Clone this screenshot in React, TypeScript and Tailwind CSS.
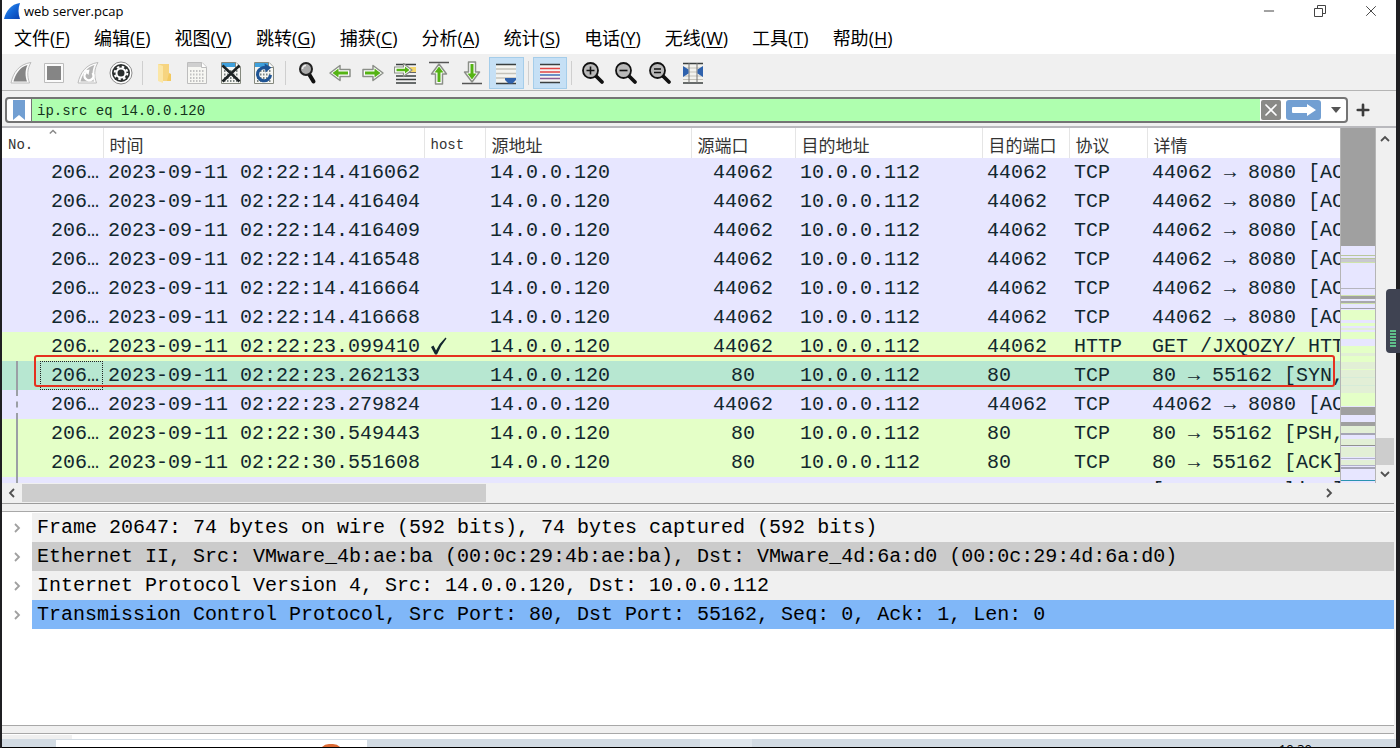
import React from 'react';
import { Minus, X, Plus } from 'lucide-react';

const menus = [
  ['文件', 'F'],
  ['编辑', 'E'],
  ['视图', 'V'],
  ['跳转', 'G'],
  ['捕获', 'C'],
  ['分析', 'A'],
  ['统计', 'S'],
  ['电话', 'Y'],
  ['无线', 'W'],
  ['工具', 'T'],
  ['帮助', 'H'],
];

const columns = [
  { label: 'No.', width: 'w-[101px]', latin: true },
  { label: '时间', width: 'w-[321px]' },
  { label: 'host', width: 'w-[61px]', latin: true },
  { label: '源地址', width: 'w-[206px]' },
  { label: '源端口', width: 'w-[104px]' },
  { label: '目的地址', width: 'w-[187px]' },
  { label: '目的端口', width: 'w-[87px]' },
  { label: '协议', width: 'w-[78px]' },
  { label: '详情', width: '' },
];

interface Packet {
  time: string;
  host?: boolean;
  port: string;
  proto: string;
  info: string;
  tone: 'tcp' | 'http' | 'selected';
  trace?: 'solid' | 'dashed';
}

const packets: Packet[] = [
  { time: '02:22:14.416062', port: '44062', proto: 'TCP', info: '44062 → 8080 [ACK]', tone: 'tcp' },
  { time: '02:22:14.416404', port: '44062', proto: 'TCP', info: '44062 → 8080 [ACK]', tone: 'tcp' },
  { time: '02:22:14.416409', port: '44062', proto: 'TCP', info: '44062 → 8080 [ACK]', tone: 'tcp' },
  { time: '02:22:14.416548', port: '44062', proto: 'TCP', info: '44062 → 8080 [ACK]', tone: 'tcp' },
  { time: '02:22:14.416664', port: '44062', proto: 'TCP', info: '44062 → 8080 [ACK]', tone: 'tcp' },
  { time: '02:22:14.416668', port: '44062', proto: 'TCP', info: '44062 → 8080 [ACK]', tone: 'tcp' },
  { time: '02:22:23.099410', host: true, port: '44062', proto: 'HTTP', info: 'GET /JXQOZY/ HTTP', tone: 'http' },
  { time: '02:22:23.262133', port: '80', proto: 'TCP', info: '80 → 55162 [SYN, ACK]', tone: 'selected', trace: 'solid' },
  { time: '02:22:23.279824', port: '44062', proto: 'TCP', info: '44062 → 8080 [ACK]', tone: 'tcp', trace: 'dashed' },
  { time: '02:22:30.549443', port: '80', proto: 'TCP', info: '80 → 55162 [PSH, ACK]', tone: 'http', trace: 'solid' },
  { time: '02:22:30.551608', port: '80', proto: 'TCP', info: '80 → 55162 [ACK]', tone: 'http', trace: 'solid' },
];

const tones = {
  tcp: 'bg-[#e7e6ff]',
  http: 'bg-[#e4ffc7]',
  selected: 'bg-[#b7e7d1]',
};

const details = [
  { text: 'Frame 20647: 74 bytes on wire (592 bits), 74 bytes captured (592 bits)', bg: 'bg-[#f0f0f0]' },
  {
    text: 'Ethernet II, Src: VMware_4b:ae:ba (00:0c:29:4b:ae:ba), Dst: VMware_4d:6a:d0 (00:0c:29:4d:6a:d0)',
    bg: 'bg-[#cbcbcb]',
  },
  { text: 'Internet Protocol Version 4, Src: 14.0.0.120, Dst: 10.0.0.112', bg: 'bg-[#f0f0f0]' },
  { text: 'Transmission Control Protocol, Src Port: 80, Dst Port: 55162, Seq: 0, Ack: 1, Len: 0', bg: 'bg-[#80b7f8]' },
];

// y, height, colour
const mapBands: [number, number, string][] = [
  [0, 118, '#a0a0a0'],
  [127, 1, '#b9c79c'],
  [130, 1, '#b9c79c'],
  [131, 3, '#c9c8cf'],
  [134, 1, '#cfe3ab'],
  [160, 1, '#b5b5bd'],
  [167, 1, '#cfe3ab'],
  [168, 3, '#a0a0a0'],
  [173, 2, '#a8a8ac'],
  [175, 1, '#cfe3ab'],
  [180, 1, '#a0a0a8'],
  [182, 10, '#e4ffc7'],
  [195, 3, '#e4ffc7'],
  [200, 2, '#e2efd6'],
  [204, 7, '#e4ffc7'],
  [218, 7, '#e4ffc7'],
  [225, 3, '#e2efd6'],
  [228, 6, '#e4ffc7'],
  [234, 31, '#e2efd6'],
  [241, 1, '#e4ffc7'],
  [249, 1, '#d6ecd8'],
  [257, 1, '#d6ecd8'],
  [265, 13, '#e4ffc7'],
  [279, 8, '#a0a0a0'],
  [294, 4, '#a0a0a0'],
  [298, 7, '#e2efd6'],
  [305, 2, '#a5a5b5'],
  [311, 6, '#e2efd6'],
  [317, 1, '#909090'],
  [319, 10, '#e2efd6'],
  [330, 1, '#b0b0c8'],
  [332, 5, '#e2efd6'],
  [337, 1, '#b0b0c8'],
  [339, 2, '#a5a5b5'],
  [352, 1, '#2a93b0'],
];

function Icon({ children }: { children: React.ReactNode }) {
  return (
    <svg viewBox="0 0 24 24" className="h-6 w-6" fill="none" aria-hidden="true">
      {children}
    </svg>
  );
}

function Fin() {
  return <path d="M2 22C4 12 10 3 22 1.500C18 8 18 15 20.500 22Z" fill="#fbfbfb" stroke="#bcbcbc" />;
}

function PageShape({ muted }: { muted?: boolean }) {
  return (
    <>
      <path d="M2.500 1.500H17L21.500 6V22.500H2.500Z" fill="#f7f7f3" stroke={muted ? '#bdbdbd' : '#85897f'} />
      <path d="M3 2H16.500L20 6H3Z" fill={muted ? '#cfcfcf' : '#3fa0dc'} />
      <path d="M16.500 1.500V6.500H21.500" fill="#fff" stroke={muted ? '#bdbdbd' : '#85897f'} />
      <path
        d="M5 10h14M5 13.500h14M5 17h14M5 20h14"
        stroke={muted ? '#c2c2c2' : '#7d8583'}
        strokeWidth="2"
        strokeDasharray="1.500 1.500"
      />
    </>
  );
}

function ArrowShape({ transform }: { transform?: string }) {
  return (
    <g transform={transform}>
      <path d="M2 8.500H12V4.500L22 12L12 19.500V15.500H2Z" fill="#fff" stroke="#8b8f88" strokeWidth="1.500" strokeLinejoin="round" />
      <path d="M4 10.500H13.500V7.500L19.500 12L13.500 16.500V13.500H4Z" fill="#55b314" />
    </g>
  );
}

function Magnifier({ children }: { children?: React.ReactNode }) {
  return (
    <>
      <path d="M15 15L21 21" stroke="#111" strokeWidth="3.800" strokeLinecap="round" />
      <circle cx="9.500" cy="9.500" r="7.500" fill="#b9b9b9" stroke="#111" strokeWidth="1.800" />
      <g stroke="#111" strokeWidth="1.600">{children}</g>
    </>
  );
}

const groups = [
  {
    width: 'w-[134px]',
    items: [
      {
        name: 'Start capture',
        art: (
          <>
            <Fin />
            <path d="M4.500 20.500C6.500 13 11 6 18.500 4C16 9 16 15 18 20.500Z" fill="#858585" />
          </>
        ),
      },
      {
        name: 'Stop capture',
        art: (
          <>
            <path d="M2.500 2.500H21.500V21.500H2.500Z" fill="#fbfbfb" stroke="#bcbcbc" />
            <path d="M5 5H19V19H5Z" fill="#858585" />
          </>
        ),
      },
      {
        name: 'Restart capture',
        art: (
          <>
            <Fin />
            <path d="M4.500 20.500C6.500 13 11 6 18.500 4C16 9 16 15 18 20.500Z" fill="#b5b5b5" />
            <path d="M10 11.500A4.500 4.500 0 1 0 16.500 12" stroke="#fff" strokeWidth="2.400" />
            <path d="M8 9.500L13.500 8.500L12.500 14Z" fill="#fff" />
          </>
        ),
      },
      {
        name: 'Capture options',
        art: (
          <>
            <circle cx="12" cy="12" r="11" fill="#fff" stroke="#8d8d8d" />
            <circle cx="12" cy="12" r="9" fill="#2b2f2f" />
            <circle cx="12" cy="12" r="4.500" stroke="#fff" strokeWidth="2" />
            <circle cx="12" cy="12" r="6.300" stroke="#fff" strokeWidth="2" strokeDasharray="2.500 2.450" />
            <circle cx="12" cy="12" r="2.500" fill="#2b2f2f" />
          </>
        ),
      },
    ],
  },
  {
    width: 'w-[134px]',
    items: [
      {
        name: 'Open',
        art: (
          <>
            <path d="M6 3H17V20H6Z" fill="#f6d480" />
            <path d="M6 3L11 5V22L6 20Z" fill="#fbe6a6" />
            <path d="M17 12L19 13V20H15Z" fill="#f3c95f" />
          </>
        ),
      },
      { name: 'Save', art: <PageShape muted /> },
      {
        name: 'Close file',
        art: (
          <>
            <PageShape />
            <path d="M3.500 4.500L20.500 20.500M20.500 4.500L3.500 20.500" stroke="#1d2324" strokeWidth="2.600" />
          </>
        ),
      },
      {
        name: 'Reload',
        art: (
          <>
            <PageShape />
            <path d="M14.500 7.200A6.500 6.500 0 1 0 18.500 14" stroke="#1f5494" strokeWidth="3.200" />
            <path d="M12.500 2.500L19.500 6.500L13.500 11.500Z" fill="#1f5494" />
          </>
        ),
      },
    ],
  },
  {
    width: 'w-[234px]',
    items: [
      {
        name: 'Find packet',
        art: (
          <>
            <path d="M14 13L18.500 20.500" stroke="#111" strokeWidth="4" strokeLinecap="round" />
            <circle cx="11" cy="8" r="6" fill="#a9a9a9" stroke="#222" strokeWidth="2" />
            <path d="M7.500 8A3.500 3.500 0 0 1 11 4.500" stroke="#eee" strokeWidth="1.500" />
          </>
        ),
      },
      { name: 'Previous packet', art: <ArrowShape transform="matrix(-1 0 0 1 24 0)" /> },
      { name: 'Next packet', art: <ArrowShape /> },
      {
        name: 'Go to packet',
        art: (
          <>
            <path d="M2 3.500H22M2 15H22M2 18.500H22M2 22H22" stroke="#3a3f3f" strokeWidth="1.500" />
            <path d="M16 6H22V11H16Z" fill="#f5d76a" />
            <path d="M2 11.500H22" stroke="#666" />
            <path d="M0.500 6H9.500V2.500L18 9L9.500 15.500V12H0.500Z" fill="#fff" stroke="#8b8f88" strokeWidth="1.200" strokeLinejoin="round" />
            <path d="M2.500 7.800H11V5.500L15.500 9L11 12.500V10.200H2.500Z" fill="#55b314" />
          </>
        ),
      },
      {
        name: 'First packet',
        art: (
          <>
            <path d="M2 1.500H22" stroke="#555" strokeWidth="1.500" />
            <ArrowShape transform="matrix(0 -1 1 0 0 25)" />
          </>
        ),
      },
      {
        name: 'Last packet',
        art: (
          <>
            <path d="M2 22.500H22" stroke="#555" strokeWidth="1.500" />
            <ArrowShape transform="matrix(0 1 -1 0 24 -1)" />
          </>
        ),
      },
      {
        name: 'Auto scroll',
        active: true,
        art: (
          <>
            <path d="M2 4H22V22H2Z" fill="#f4f4f0" />
            <path d="M2 3.500H22M2 22.500H22" stroke="#3a3f3f" strokeWidth="1.500" />
            <path d="M2 8H22M2 12.500H22M2 17H22" stroke="#c4c2ba" strokeWidth="1.500" />
            <path d="M11 17H22V19L18.500 22.500H14.500L11 19Z" fill="#2f62ad" />
          </>
        ),
      },
    ],
  },
  {
    width: 'w-[34px]',
    items: [
      {
        name: 'Colorize',
        active: true,
        art: (
          <>
            <path d="M2 3H22V22H2Z" fill="#f4f4f4" />
            <path d="M2 3.500H22" stroke="#3a3f3f" strokeWidth="1.500" />
            <path d="M2 7.500H22M2 11H22" stroke="#e04646" strokeWidth="1.500" />
            <path d="M2 14H22" stroke="#3f6fb8" strokeWidth="1.500" />
            <path d="M2 17.500H22" stroke="#8c5a94" strokeWidth="1.500" />
            <path d="M2 21.500H22" stroke="#3a3f3f" strokeWidth="1.500" />
          </>
        ),
      },
    ],
  },
  {
    width: 'w-[134px]',
    items: [
      { name: 'Zoom in', art: <Magnifier><path d="M5.500 9.500H13.500M9.500 5.500V13.500" /></Magnifier> },
      { name: 'Zoom out', art: <Magnifier><path d="M5.500 9.500H13.500" /></Magnifier> },
      { name: 'Normal size', art: <Magnifier><path d="M6 8H13M6 11.500H13" /></Magnifier> },
      {
        name: 'Resize columns',
        art: (
          <>
            <path d="M2 3H22V22H2Z" fill="#f2f2ee" />
            <path d="M2 7H22M2 11H22M2 15H22M2 18.500H22" stroke="#c4c2ba" />
            <path d="M2 2.500H22M2 22H22" stroke="#3a3f3f" strokeWidth="1.500" />
            <path d="M8 2V22M16 2V22" stroke="#777" />
            <path d="M2 5L7.500 8.500V12.500L2 16ZM22 5L16.500 8.500V12.500L22 16Z" fill="#2f62ad" />
          </>
        ),
      },
    ],
  },
];

function Chevron({ d, className }: { d: string; className: string }) {
  return (
    <svg viewBox="0 0 10 10" className={className} fill="none" stroke="currentColor" strokeWidth="1.800" aria-hidden="true">
      <path d={d} />
    </svg>
  );
}

function TitleBar() {
  return (
    <div className="flex h-[22px] items-center bg-white pl-[2px]">
      <svg viewBox="0 0 18 18" className="h-[18px] w-[18px]" aria-hidden="true">
        <defs>
          <linearGradient id="fin" x1="0" y1="0" x2="1" y2="1">
            <stop offset="0" stopColor="#4aa0ee" />
            <stop offset="0.5" stopColor="#1467d8" />
            <stop offset="1" stopColor="#0b3fae" />
          </linearGradient>
        </defs>
        <path d="M0 17C2 9 7 2 16 1C14 6 14 12 16 17Z" fill="url(#fin)" />
      </svg>
      <h1 className="ml-[2px] flex-1 text-[13px] leading-5 text-black">web server.pcap</h1>
      <div className="flex text-[#444]">
        <button aria-label="Minimize" className="flex h-5 w-[51px] items-center justify-center">
          <Minus className="h-4 w-4" strokeWidth={1.5} />
        </button>
        <button aria-label="Restore" className="flex h-5 w-[51px] items-center justify-center">
          <svg viewBox="0 0 14 14" className="h-[14px] w-[14px]" fill="none" stroke="currentColor">
            <path d="M1.500 4.500H9.500V12.500H1.500ZM4.500 4.500V1.500H12.500V9.500H9.500" />
          </svg>
        </button>
        <button aria-label="Close" className="flex h-5 w-[51px] items-center justify-center">
          <X className="h-[18px] w-[18px]" strokeWidth={1.3} />
        </button>
      </div>
    </div>
  );
}

function MenuBar() {
  return (
    <nav className="flex h-8 items-center gap-6 bg-white pl-3 text-[18px] leading-6 text-black">
      {menus.map(([label, key]) => (
        <button key={key} className="whitespace-nowrap">
          {label}(<span className="underline underline-offset-2">{key}</span>)
        </button>
      ))}
    </nav>
  );
}

function Toolbar() {
  return (
    <div className="flex h-[37px] items-end border-b border-[#b4b4b4] bg-[#f0f0f0] pb-px pl-[2px]">
      {groups.map((group, i) => (
        <React.Fragment key={i}>
          {i > 0 && (
            <div className="flex h-8 w-[9px] items-center justify-center">
              <div className="h-6 border-l border-[#cfcfcf]" />
            </div>
          )}
          <div className={`flex ${group.width}`}>
            {group.items.map((item) => (
              <button
                key={item.name}
                aria-label={item.name}
                className={
                  'active' in item
                    ? 'flex h-8 flex-1 items-center justify-center border border-[#a5cdea] bg-[#c6e0f5]'
                    : 'flex h-8 flex-1 items-center justify-center'
                }
              >
                <Icon>{item.art}</Icon>
              </button>
            ))}
          </div>
        </React.Fragment>
      ))}
    </div>
  );
}

function FilterBar() {
  return (
    <div className="flex h-[37px] items-center border-b-2 border-[#b9b9bd] bg-[#f0f0f0] pt-[2px] pl-[3px]">
      <div className="flex h-[26px] flex-1 items-center rounded-[4px] border-2 border-[#747474] bg-white">
        <button aria-label="Bookmarks" className="flex h-full w-[25px] items-center justify-center border-r border-[#747474]">
          <svg viewBox="0 0 12 20" className="h-5 w-3" aria-hidden="true">
            <path d="M0 0H12V20L6 15L0 20Z" fill="#729fd2" />
          </svg>
        </button>
        <input
          aria-label="Display filter"
          defaultValue="ip.src eq 14.0.0.120"
          className="h-full min-w-0 flex-1 bg-[#afffaf] pt-[2px] pl-[5px] font-['Liberation_Mono',monospace] text-[14px] text-[#14331c] outline-none"
        />
        <button aria-label="Clear" className="ml-px flex h-5 w-5 items-center justify-center rounded-[2px] bg-[#8a8a87] text-white">
          <X className="h-5 w-5" strokeWidth={2} />
        </button>
        <button aria-label="Apply" className="ml-[5px] flex h-5 w-[35px] items-center justify-center rounded-[3px] bg-[#729fd2]">
          <svg viewBox="0 0 24 12" className="h-3 w-6" aria-hidden="true">
            <path d="M1 3H15V0L24 6L15 12V9H1Q0 9 0 8V4Q0 3 1 3Z" fill="#fff" />
          </svg>
        </button>
        <button aria-label="Recent filters" className="flex h-5 w-[25px] items-center justify-center pl-1">
          <svg viewBox="0 0 10 6" className="h-[6px] w-[10px]" aria-hidden="true">
            <path d="M0 0H10L5 6Z" fill="#555" />
          </svg>
        </button>
      </div>
      <button aria-label="Add filter button" className="flex w-12 justify-start pl-[6px] text-[#3c3c3c]">
        <Plus className="h-[18px] w-[18px]" strokeWidth={3.5} />
      </button>
    </div>
  );
}

function PacketTable() {
  return (
    <div className="relative min-w-0 flex-1">
      <table className="w-full table-fixed border-collapse font-['Liberation_Mono',monospace] text-[20px] leading-6 whitespace-nowrap text-[#12272e]">
        <thead>
          <tr className="h-[30px] bg-white text-[#333]">
            {columns.map((col) => (
              <th
                key={col.label}
                scope="col"
                className={`relative overflow-hidden border-r border-[#e5e5e5] p-0 pl-[6px] text-left font-normal last:border-r-0 ${col.width}`}
              >
                <span
                  className={
                    col.latin
                      ? 'block pt-1 text-[14px] leading-5'
                      : "block pt-1 font-['Noto_Sans_CJK_SC',sans-serif] text-[17px] leading-5"
                  }
                >
                  {col.label}
                </span>
                {col.label === 'No.' && (
                  <Chevron d="M1 7L5 3L9 7" className="absolute top-0 left-[46px] h-2 w-[10px] text-[#888]" />
                )}
              </th>
            ))}
          </tr>
        </thead>
        <tbody>
          {packets.map((p) => (
            <tr key={p.time} className={`h-[29px] ${tones[p.tone]}`}>
              <td className="relative p-0 pr-1 text-right">
                {p.trace && (
                  <span
                    className={
                      p.trace === 'solid'
                        ? 'absolute inset-y-0 left-[14px] border-l-2 border-[#9b9fa5]'
                        : 'absolute inset-y-0 left-[14px] border-l-2 border-dashed border-[#9b9fa5]'
                    }
                  />
                )}
                {p.tone === 'selected' && (
                  <span className="absolute inset-y-0 right-0 left-[38px] border border-dotted border-[#222]" />
                )}
                206…
              </td>
              <td className="p-0 pl-[5px]">2023-09-11 {p.time}</td>
              <td className="p-0 pl-[5px]">
                {p.host && (
                  <svg viewBox="0 0 20 20" className="h-5 w-5" fill="#12272e" role="img" aria-label="yes">
                    <path d="M2 10L4.500 8.500L7 13.500Q10.500 6 16.500 0.500L17.500 1.500Q11.500 8.500 8 17.500H6Z" />
                  </svg>
                )}
              </td>
              <td className="p-0 pl-[5px]">14.0.0.120</td>
              <td className="p-0 text-center">{p.port}</td>
              <td className="p-0 pl-[5px]">10.0.0.112</td>
              <td className="p-0 pl-[5px]">{p.port}</td>
              <td className="p-0 pl-[5px]">{p.proto}</td>
              <td className="overflow-hidden p-0 pl-[5px]">{p.info}</td>
            </tr>
          ))}
        </tbody>
      </table>
      {/* next row, cut off by the viewport */}
      <div className="flex h-[6px] items-start justify-between overflow-hidden bg-[#e7e6ff]">
        <span className="ml-[14px] h-[6px] border-l-2 border-[#9b9fa5]" />
        <span className="w-[188px] overflow-hidden pt-[2px] font-['Liberation_Mono',monospace] text-[20px] leading-6 whitespace-nowrap text-[#12272e]">
          [TCP Keep-Alive]
        </span>
      </div>
      <div className="absolute top-[227px] right-[5px] left-[32px] h-8 rounded-[3px] border-2 border-[#e5301f]" />
    </div>
  );
}

function PacketPane() {
  return (
    <section className="border-b border-[#9c9c9c] bg-[#f0f0f0]">
      <div className="flex">
        <PacketTable />
        <svg viewBox="0 0 36 355" className="h-[355px] w-9" shapeRendering="crispEdges" aria-hidden="true">
          <rect width="36" height="355" fill="#e7e6ff" />
          {mapBands.map(([y, h, fill]) => (
            <rect key={y} y={y} width="36" height={h} fill={fill} />
          ))}
          <path d="M0.500 0V355M35.500 0V355" stroke="#b5b5b5" />
        </svg>
        <div className="flex w-[18px] flex-col items-center text-[#505050]">
          <Chevron d="M1 7L5 3L9 7" className="mt-[6px] h-[10px] w-[10px]" />
          <div className="flex-1" />
          <div className="h-[27px] w-full bg-[#cdcdcd]" />
          <Chevron d="M1 3L5 7L9 3" className="my-1 h-[10px] w-[10px]" />
        </div>
      </div>
      <div className="flex h-5 items-center text-[#505050]">
        <Chevron d="M7 1L3 5L7 9" className="mx-[5px] h-[10px] w-[10px]" />
        <div className="h-[18px] w-1/3 bg-[#cdcdcd]" />
        <div className="flex-1" />
        <Chevron d="M3 1L7 5L3 9" className="mr-[60px] h-[10px] w-[10px]" />
      </div>
    </section>
  );
}

function DetailsPane() {
  return (
    <section className="mt-[7px] flex-1 border-y border-[#a8a8a8] bg-white pt-px">
      <ul className="font-['Liberation_Mono',monospace] text-[20px] leading-[29px] whitespace-nowrap text-black">
        {details.map((row) => (
          <li key={row.text} className="flex h-[29px] items-center">
            <button aria-label="Expand" className="flex w-[30px] justify-center text-[#a0a0a0]">
              <Chevron d="M3 1L7 5L3 9" className="h-[10px] w-[10px]" />
            </button>
            <span className={`min-w-0 flex-1 overflow-hidden pl-[5px] ${row.bg}`}>{row.text}</span>
          </li>
        ))}
      </ul>
    </section>
  );
}

function Taskbar() {
  return (
    <footer className="flex h-[9px] items-start overflow-hidden border-b border-black bg-[#d2dbe3]">
      <div className="mt-px ml-[54px] flex h-2 w-[311px] justify-end overflow-hidden bg-white pr-6">
        <span className="mt-1 h-5 w-6 rounded-full bg-[#dd6b35]" />
      </div>
      <div className="ml-[333px] h-full w-[52px] bg-[#dfe6ec]" />
      <time className="mt-[2px] mr-[84px] ml-auto text-[13px] leading-4 text-black">10:30</time>
    </footer>
  );
}

export default function App() {
  return (
    <div className="flex min-h-screen bg-[#1f1f22] font-['Open_Sans','Noto_Sans_CJK_SC',sans-serif]">
      <main className="relative mr-1 ml-[2px] flex min-w-0 flex-1 flex-col bg-[#f0f0f0]">
        <TitleBar />
        <MenuBar />
        <Toolbar />
        <FilterBar />
        <div className="flex flex-1 flex-col pr-[2px]">
          <PacketPane />
          <DetailsPane />
          <div className="mt-[7px] flex h-[6px] items-end border-t border-[#a8a8a8] bg-white">
            <div className="h-1 w-[70px] bg-[#f0f0f0]" />
          </div>
        </div>
        <Taskbar />
        <div className="absolute top-[289px] -right-1 flex h-16 w-[14px] items-end rounded-l-[4px] bg-[#3f4352] pb-[6px] pl-[4px]">
          <div className="flex w-[6px] flex-col gap-px">
            <span className="h-[2px] bg-[#5fc08a]" />
            <span className="h-[2px] bg-[#5fc08a]" />
            <span className="h-[2px] bg-[#5fc08a]" />
            <span className="h-[2px] bg-[#5fc08a]" />
            <span className="h-[2px] bg-[#5fc08a]" />
            <span className="h-[2px] bg-[#5fc08a]" />
          </div>
        </div>
      </main>
    </div>
  );
}
